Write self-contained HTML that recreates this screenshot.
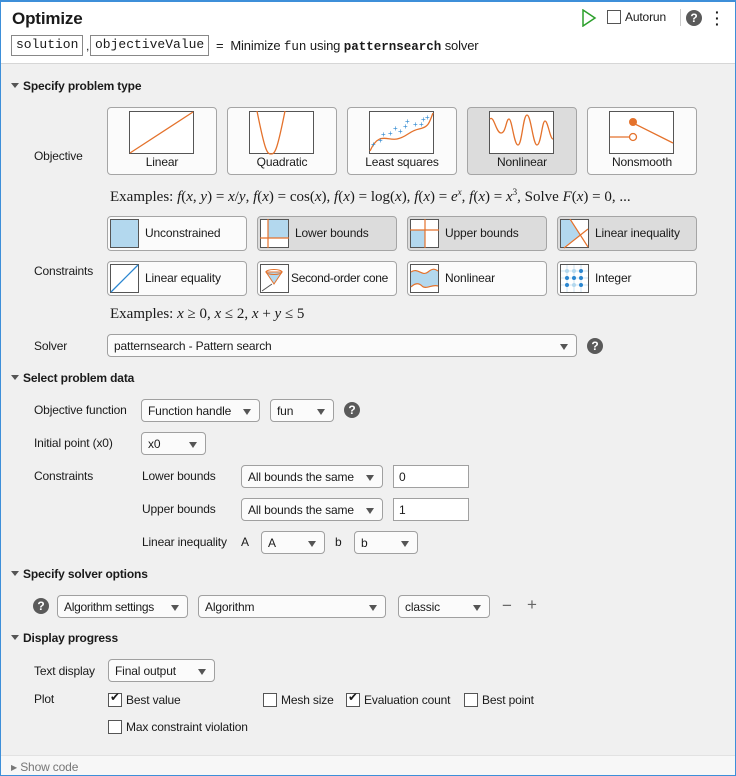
<!DOCTYPE html>
<html><head><style>
*{box-sizing:border-box;margin:0;padding:0}
body{width:736px;height:776px;overflow:hidden;font-family:"Liberation Sans",Arial,sans-serif;font-size:12px;letter-spacing:-0.15px;color:#1a1a1a;background:#f0f0f0;position:relative}
.a{position:absolute;white-space:nowrap}
.frame{position:absolute;left:0;top:0;width:736px;height:776px;border:1px solid #3d8fd9;border-top:2px solid #3d8fd9}
.hdr{left:1px;top:2px;width:734px;height:62px;background:#fff;border-bottom:1px solid #d6d6d6}
.sec{font-weight:bold}
.tri{display:inline-block;width:0;height:0;border-left:4px solid transparent;border-right:4px solid transparent;border-top:5px solid #555;margin-right:4px;vertical-align:2px}
.btn{position:absolute;border:1px solid #a5a5a5;border-radius:4px;background:#fbfbfb}
.btn.sel{background:#dcdcdc}
.ob{width:110px;height:68px;top:107px}
.ob svg{position:absolute;left:21px;top:3px}
.ob span{position:absolute;left:0;right:0;top:47px;text-align:center}
.cb{width:140px;height:35px}
.cb svg{position:absolute;left:2px;top:2px}
.cb span{position:absolute;left:37px;top:9px;white-space:nowrap}
.dd{position:absolute;background:#fbfbfb;border:1px solid #a0a0a0;border-radius:4px;height:23px;padding:4px 0 0 6px;white-space:nowrap}
.dd:after{content:"";position:absolute;right:8px;top:9px;border-left:4px solid transparent;border-right:4px solid transparent;border-top:6px solid #555}
.tb{position:absolute;background:#fff;border:1px solid #a0a0a0;height:23px;padding:4px 0 0 5px}
.q{position:absolute;width:16px;height:16px;border-radius:50%;background:#5a5a5a;color:#fff;font-weight:bold;font-size:12px;text-align:center;line-height:16px;letter-spacing:0}
.ck{position:absolute;width:14px;height:14px;border:1px solid #555;background:#fff}
.math{font-family:"Liberation Serif",serif;font-size:15px;letter-spacing:0}
.mono{font-family:"Liberation Mono",monospace;font-size:13px;letter-spacing:0}
</style></head><body>
<div class="a hdr"></div>
<div class="a" style="left:12px;top:9px;font-size:17px;font-weight:bold">Optimize</div>
<div class="a mono" style="left:11px;top:35px;border:1px solid #888;padding:1px 4px;height:21px;background:#fff">solution</div>
<div class="a" style="left:86px;top:39px">,</div>
<div class="a mono" style="left:90px;top:35px;border:1px solid #888;padding:1px 4px;height:21px;background:#fff">objectiveValue</div>
<div class="a" style="left:216px;top:38px;font-size:13px">= &nbsp;Minimize <span class="mono" style="font-size:12.5px">fun</span> using <span class="mono" style="font-size:12.5px;font-weight:bold">patternsearch</span> solver</div>
<svg class="a" style="left:581px;top:9px" width="16" height="18"><path d="M2 1 L14 9 L2 17 Z" fill="none" stroke="#2ca02c" stroke-width="1.5"/></svg>
<div class="ck" style="left:607px;top:10px"></div>
<div class="a" style="left:625px;top:10px">Autorun</div>
<div class="a" style="left:680px;top:9px;width:1px;height:17px;background:#ccc"></div>
<div class="q" style="left:686px;top:10px">?</div>
<div class="a" style="left:715px;top:9px;font-weight:bold;font-size:14px;line-height:6px">·<br>·<br>·</div>

<div class="a sec" style="left:11px;top:79px"><span class="tri"></span>Specify problem type</div>
<div class="a" style="left:34px;top:149px">Objective</div>

<div class="btn ob" style="left:107px"><svg width="66" height="44"><rect x=".5" y=".5" width="64" height="42" fill="#fff" stroke="#555"/><path d="M1 42 L64 1" stroke="#e4722c" stroke-width="1.3"/></svg><span>Linear</span></div>
<div class="btn ob" style="left:227px"><svg width="66" height="44"><rect x=".5" y=".5" width="64" height="42" fill="#fff" stroke="#555"/><path d="M8 0 C16 40 18 43 22 43 S28 40 36 0" fill="none" stroke="#e4722c" stroke-width="1.3"/></svg><span>Quadratic</span></div>
<div class="btn ob" style="left:347px"><svg width="66" height="44"><rect x=".5" y=".5" width="64" height="42" fill="#fff" stroke="#555"/><path d="M1 40 C10 20 18 30 28 28 S40 20 50 18 S60 12 64 2" fill="none" stroke="#e4722c" stroke-width="1.3"/><g fill="#2a86d0" font-size="8"><text x="2" y="36">+</text><text x="9" y="32">+</text><text x="12" y="26">+</text><text x="19" y="25">+</text><text x="24" y="20">+</text><text x="29" y="23">+</text><text x="34" y="18">+</text><text x="36" y="13">+</text><text x="44" y="16">+</text><text x="50" y="16">+</text><text x="52" y="11">+</text><text x="56" y="9">+</text></g></svg><span>Least squares</span></div>
<div class="btn ob sel" style="left:467px"><svg width="66" height="44"><rect x=".5" y=".5" width="64" height="42" fill="#fff" stroke="#555"/><path d="M1 8 C5 4 7 22 12 22 S17 8 20 8 S25 34 29 34 S34 4 38 4 S44 34 48 34 S53 10 56 10 S61 28 64 28" fill="none" stroke="#e4722c" stroke-width="1.3"/></svg><span>Nonlinear</span></div>
<div class="btn ob" style="left:587px"><svg width="66" height="44"><rect x=".5" y=".5" width="64" height="42" fill="#fff" stroke="#555"/><path d="M1 26 L22 26 M24 12 L64 32" stroke="#e4722c" stroke-width="1.3"/><circle cx="24" cy="11" r="4" fill="#e4722c"/><circle cx="24" cy="26" r="3.5" fill="#fff" stroke="#e4722c" stroke-width="1.3"/></svg><span>Nonsmooth</span></div>

<div class="a math" style="left:110px;top:187px">Examples: <i>f</i>(<i>x</i>, <i>y</i>) = <i>x</i>/<i>y</i>, <i>f</i>(<i>x</i>) = cos(<i>x</i>), <i>f</i>(<i>x</i>) = log(<i>x</i>), <i>f</i>(<i>x</i>) = <i>e<sup style="font-size:9px">x</sup></i>, <i>f</i>(<i>x</i>) = <i>x</i><sup style="font-size:9px">3</sup>, Solve <i>F</i>(<i>x</i>) = 0, ...</div>

<div class="a" style="left:34px;top:264px">Constraints</div>
<div class="btn cb" style="left:107px;top:216px"><svg width="30" height="30"><rect x=".5" y=".5" width="28" height="28" fill="#b3d8ee" stroke="#555"/></svg><span>Unconstrained</span></div>
<div class="btn cb sel" style="left:257px;top:216px"><svg width="30" height="30"><rect x=".5" y=".5" width="28" height="28" fill="#fff" stroke="#555"/><rect x="8" y="1" width="20" height="18" fill="#b3d8ee"/><path d="M8 0V29M0 19H29" stroke="#e4722c" stroke-width="1.2"/></svg><span>Lower bounds</span></div>
<div class="btn cb sel" style="left:407px;top:216px"><svg width="30" height="30"><rect x=".5" y=".5" width="28" height="28" fill="#fff" stroke="#555"/><rect x="1" y="11" width="14" height="17" fill="#b3d8ee"/><path d="M15 0V29M0 11H29" stroke="#e4722c" stroke-width="1.2"/></svg><span>Upper bounds</span></div>
<div class="btn cb sel" style="left:557px;top:216px"><svg width="30" height="30"><rect x=".5" y=".5" width="28" height="28" fill="#fff" stroke="#555"/><path d="M1 1H10L20 16L4 28H1Z" fill="#b3d8ee"/><path d="M10 0L28 28M4 29L28 10" stroke="#e4722c" stroke-width="1.2"/></svg><span>Linear inequality</span></div>
<div class="btn cb" style="left:107px;top:261px"><svg width="30" height="30"><rect x=".5" y=".5" width="28" height="28" fill="#fff" stroke="#555"/><path d="M1 28L28 1" stroke="#2a86d0" stroke-width="1.3"/></svg><span>Linear equality</span></div>
<div class="btn cb" style="left:257px;top:261px"><svg width="30" height="30"><rect x=".5" y=".5" width="28" height="28" fill="#fff" stroke="#555"/><path d="M6 8L14 20L22 8Z" fill="#b3d8ee" stroke="#e4722c"/><ellipse cx="14" cy="8" rx="8" ry="2.5" fill="none" stroke="#e4722c"/><path d="M2 27L12 20" stroke="#555"/></svg><span style="left:33px;letter-spacing:-0.3px">Second-order cone</span></div>
<div class="btn cb" style="left:407px;top:261px"><svg width="30" height="30"><rect x=".5" y=".5" width="28" height="28" fill="#fff" stroke="#555"/><path d="M1 8C8 3 12 13 18 8S26 6 28 7V22C22 20 18 26 12 22S4 20 1 23Z" fill="#b3d8ee"/><path d="M1 8C8 3 12 13 18 8S26 6 28 7M1 23C4 20 8 18 12 22S22 20 28 22" fill="none" stroke="#e4722c" stroke-width="1.2"/></svg><span>Nonlinear</span></div>
<div class="btn cb" style="left:557px;top:261px"><svg width="30" height="30"><rect x=".5" y=".5" width="28" height="28" fill="#fff" stroke="#555"/><path d="M7 1V28M14 1V28M21 1V28M1 7H28M1 14H28M1 21H28" stroke="#cfe3f0"/><g fill="#2a86d0"><circle cx="21" cy="7" r="2"/><circle cx="7" cy="14" r="2"/><circle cx="14" cy="14" r="2"/><circle cx="21" cy="14" r="2"/><circle cx="7" cy="21" r="2"/><circle cx="21" cy="21" r="2"/></g><g fill="#b3d8ee"><circle cx="7" cy="7" r="2"/><circle cx="14" cy="7" r="2"/><circle cx="14" cy="21" r="2"/></g></svg><span>Integer</span></div>

<div class="a math" style="left:110px;top:306px">Examples: <i>x</i> ≥ 0, <i>x</i> ≤ 2, <i>x</i> + <i>y</i> ≤ 5</div>

<div class="a" style="left:34px;top:339px">Solver</div>
<div class="dd" style="left:107px;top:334px;width:470px">patternsearch - Pattern search</div>
<div class="q" style="left:587px;top:338px">?</div>

<div class="a sec" style="left:11px;top:371px"><span class="tri"></span>Select problem data</div>
<div class="a" style="left:34px;top:403px">Objective function</div>
<div class="dd" style="left:141px;top:399px;width:119px">Function handle</div>
<div class="dd" style="left:270px;top:399px;width:64px">fun</div>
<div class="q" style="left:344px;top:402px">?</div>
<div class="a" style="left:34px;top:436px">Initial point (x0)</div>
<div class="dd" style="left:141px;top:432px;width:65px">x0</div>
<div class="a" style="left:34px;top:469px">Constraints</div>
<div class="a" style="left:142px;top:469px">Lower bounds</div>
<div class="dd" style="left:241px;top:465px;width:142px">All bounds the same</div>
<div class="tb" style="left:393px;top:465px;width:76px">0</div>
<div class="a" style="left:142px;top:502px">Upper bounds</div>
<div class="dd" style="left:241px;top:498px;width:142px">All bounds the same</div>
<div class="tb" style="left:393px;top:498px;width:76px">1</div>
<div class="a" style="left:142px;top:535px">Linear inequality</div>
<div class="a" style="left:241px;top:535px">A</div>
<div class="dd" style="left:261px;top:531px;width:64px">A</div>
<div class="a" style="left:335px;top:535px">b</div>
<div class="dd" style="left:354px;top:531px;width:64px">b</div>

<div class="a sec" style="left:11px;top:567px"><span class="tri"></span>Specify solver options</div>
<div class="q" style="left:33px;top:598px">?</div>
<div class="dd" style="left:57px;top:595px;width:131px;letter-spacing:-0.3px">Algorithm settings</div>
<div class="dd" style="left:198px;top:595px;width:188px">Algorithm</div>
<div class="dd" style="left:398px;top:595px;width:92px">classic</div>
<div class="a" style="left:502px;top:596px;font-size:17px;color:#666">−</div>
<div class="a" style="left:527px;top:595px;font-size:17px;color:#666">+</div>

<div class="a sec" style="left:11px;top:631px"><span class="tri"></span>Display progress</div>
<div class="a" style="left:34px;top:664px">Text display</div>
<div class="dd" style="left:108px;top:659px;width:107px">Final output</div>
<div class="a" style="left:34px;top:692px">Plot</div>
<div class="ck" style="left:108px;top:693px"></div><div class="a" style="left:110px;top:690px;font-size:12px">✔</div>
<div class="a" style="left:126px;top:693px">Best value</div>
<div class="ck" style="left:263px;top:693px"></div>
<div class="a" style="left:281px;top:693px">Mesh size</div>
<div class="ck" style="left:346px;top:693px"></div><div class="a" style="left:348px;top:690px">✔</div>
<div class="a" style="left:364px;top:693px">Evaluation count</div>
<div class="ck" style="left:464px;top:693px"></div>
<div class="a" style="left:482px;top:693px">Best point</div>
<div class="ck" style="left:108px;top:720px"></div>
<div class="a" style="left:126px;top:720px">Max constraint violation</div>

<div class="a" style="left:1px;top:755px;width:734px;height:20px;background:#f7f7f7;border-top:1px solid #e2e2e2"></div>
<div class="a" style="left:11px;top:760px;color:#777"><span style="font-size:8px;vertical-align:1px">▶</span> Show code</div>
<div class="frame"></div>
</body></html>
